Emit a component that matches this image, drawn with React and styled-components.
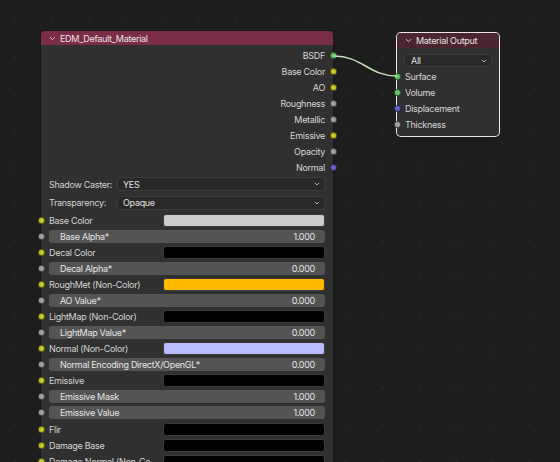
import React from 'react';
import styled, { createGlobalStyle } from 'styled-components';

const SOCKET = {
  shader: '#63c763',
  color: '#c7c729',
  float: '#a1a1a1',
  vector: '#6363c7',
};

const OUTPUTS = [
  { name: 'BSDF', type: 'shader' },
  { name: 'Base Color', type: 'color' },
  { name: 'AO', type: 'color' },
  { name: 'Roughness', type: 'float' },
  { name: 'Metallic', type: 'float' },
  { name: 'Emissive', type: 'color' },
  { name: 'Opacity', type: 'float' },
  { name: 'Normal', type: 'vector' },
];

const INPUTS = [
  { kind: 'color', name: 'Base Color', swatch: '#cccccc' },
  { kind: 'value', name: 'Base Alpha*', value: '1.000' },
  { kind: 'color', name: 'Decal Color', swatch: '#000000' },
  { kind: 'value', name: 'Decal Alpha*', value: '0.000' },
  { kind: 'color', name: 'RoughMet (Non-Color)', swatch: '#ffbb00' },
  { kind: 'value', name: 'AO Value*', value: '0.000' },
  { kind: 'color', name: 'LightMap (Non-Color)', swatch: '#000000' },
  { kind: 'value', name: 'LightMap Value*', value: '0.000' },
  { kind: 'color', name: 'Normal (Non-Color)', swatch: '#bbbbff' },
  { kind: 'value', name: 'Normal Encoding DirectX/OpenGL*', value: '0.000' },
  { kind: 'color', name: 'Emissive', swatch: '#000000' },
  { kind: 'value', name: 'Emissive Mask', value: '1.000' },
  { kind: 'value', name: 'Emissive Value', value: '1.000' },
  { kind: 'color', name: 'Flir', swatch: '#000000' },
  { kind: 'color', name: 'Damage Base', swatch: '#000000' },
  { kind: 'color', name: 'Damage Normal (Non_Co...', swatch: '#000000' },
];

const MATERIAL_OUTPUTS = [
  { name: 'Surface', type: 'shader' },
  { name: 'Volume', type: 'shader' },
  { name: 'Displacement', type: 'vector' },
  { name: 'Thickness', type: 'float' },
];

function Chevron({ size = 7, color = '#d0d0d0' }) {
  return (
    <svg width={size} height={size} viewBox="0 0 8 8">
      <path d="M1.5 2.8 L4 5.3 L6.5 2.8" fill="none" stroke={color} strokeWidth="1.1" strokeLinecap="round" strokeLinejoin="round" />
    </svg>
  );
}

function Dropdown({ label }) {
  return (
    <Select>
      <span>{label}</span>
      <Chevron size={6} />
    </Select>
  );
}

export default function App() {
  return (
    <>
      <GlobalStyle />
      <Canvas>
        <Link width="560" height="462">
          <path d="M334 56 C 362 56, 369 76, 397 76" fill="none" stroke="#c3e0bd" strokeWidth="1.6" />
        </Link>

        <Node $left={41} $top={31} $width={292}>
          <Header $bg="#7b2c46">
            <Chevron />
            <span>EDM_Default_Material</span>
          </Header>
          <Body>
            <Outputs>
              {OUTPUTS.map(o => (
                <OutputRow key={o.name}>
                  {o.name}
                  <Socket $color={SOCKET[o.type]} $side="right" />
                </OutputRow>
              ))}
            </Outputs>
            <PropRow>
              <PropLabel>Shadow Caster:</PropLabel>
              <Dropdown label="YES" />
            </PropRow>
            <PropRow>
              <PropLabel>Transparency:</PropLabel>
              <Dropdown label="Opaque" />
            </PropRow>
            <Inputs>
              {INPUTS.map(input =>
                input.kind === 'color' ? (
                  <InputRow key={input.name}>
                    <Socket $color={SOCKET.color} $side="left" />
                    <InputLabel>{input.name}</InputLabel>
                    <Swatch $color={input.swatch} />
                  </InputRow>
                ) : (
                  <InputRow key={input.name}>
                    <Socket $color={SOCKET.float} $side="left" />
                    <Slider>
                      <span>{input.name}</span>
                      <span>{input.value}</span>
                    </Slider>
                  </InputRow>
                )
              )}
            </Inputs>
          </Body>
        </Node>

        <Node $left={397} $top={33} $width={102} $selected>
          <Header $bg="#4b2530" $small>
            <Chevron />
            <span>Material Output</span>
          </Header>
          <Body $pad>
            <TargetSelect>
              <span>All</span>
              <Chevron size={6} />
            </TargetSelect>
            {MATERIAL_OUTPUTS.map(o => (
              <TargetRow key={o.name}>
                <Socket $color={SOCKET[o.type]} $side="left" />
                {o.name}
              </TargetRow>
            ))}
          </Body>
        </Node>
      </Canvas>
    </>
  );
}

const GlobalStyle = createGlobalStyle`
  html, body {
    margin: 0;
    padding: 0;
    background: #1d1d1d;
  }
  body {
    font-family: Inter, "DejaVu Sans", sans-serif;
    font-size: 9px;
    letter-spacing: -0.3px;
    color: #dcdcdc;
    -webkit-font-smoothing: antialiased;
  }
`;

const Canvas = styled.div`
  position: relative;
  width: 560px;
  height: 462px;
  overflow: hidden;
  background-color: #1d1d1d;
  background-image: radial-gradient(circle, #2b2b2b 0.8px, transparent 1.2px);
  background-size: 36.75px 36.75px;
  background-position: 33.6px 2.6px;
`;

const Link = styled.svg`
  position: absolute;
  left: 0;
  top: 0;
  z-index: 2;
  pointer-events: none;
`;

const Node = styled.div`
  position: absolute;
  left: ${({ $left }) => $left}px;
  top: ${({ $top }) => $top}px;
  width: ${({ $width }) => $width}px;
  border-radius: 4px;
  background: #303030;
  box-shadow: ${({ $selected }) =>
    $selected ? '0 0 0 1px #e8e8e8' : '0 0 0 1px #181818'};
  z-index: 1;
`;

const Header = styled.div`
  display: flex;
  align-items: center;
  gap: 4px;
  height: ${({ $small }) => ($small ? 15 : 14)}px;
  padding-left: 8px;
  background: ${({ $bg }) => $bg};
  border-radius: 4px 4px 0 0;
  color: #e6e6e6;
  line-height: 1;
`;

const Body = styled.div`
  display: flex;
  flex-direction: column;
  padding-bottom: ${({ $pad }) => ($pad ? 4 : 0)}px;
  border-radius: 0 0 4px 4px;
`;

const Outputs = styled.div`
  display: flex;
  flex-direction: column;
  padding-top: 2px;
`;

const OutputRow = styled.div`
  position: relative;
  display: flex;
  align-items: center;
  justify-content: flex-end;
  height: 16px;
  padding-right: 8px;
  color: #d6d6d6;
`;

const Socket = styled.span`
  position: absolute;
  top: 50%;
  ${({ $side }) => ($side === 'right' ? 'right: -3.5px;' : 'left: -3.5px;')}
  width: 5px;
  height: 5px;
  margin-top: -3.5px;
  border-radius: 50%;
  background: ${({ $color }) => $color};
  border: 1px solid rgba(0, 0, 0, 0.55);
`;

const PropRow = styled.div`
  display: flex;
  align-items: center;
  height: 18.5px;
  padding: 0 8px;
`;

const PropLabel = styled.span`
  width: 68px;
  color: #d0d0d0;
`;

const Select = styled.div`
  flex: 1;
  display: flex;
  align-items: center;
  justify-content: space-between;
  height: 12px;
  padding: 0 4px 0 5px;
  background: #282828;
  border: 1px solid #3c3c3c;
  border-radius: 3px;
  color: #e0e0e0;
`;

const Inputs = styled.div`
  display: flex;
  flex-direction: column;
`;

const InputRow = styled.div`
  position: relative;
  display: flex;
  align-items: center;
  height: 16.08px;
  padding: 0 8px;
`;

const InputLabel = styled.span`
  width: 114px;
  color: #d4d4d4;
  white-space: nowrap;
  overflow: hidden;
`;

const Swatch = styled.div`
  flex: 1;
  height: 11px;
  border-radius: 3px;
  background: ${({ $color }) => $color};
  border: 1px solid #3a3a3a;
`;

const Slider = styled.div`
  flex: 1;
  display: flex;
  align-items: center;
  justify-content: space-between;
  height: 13px;
  padding: 0 10px 0 11px;
  border-radius: 3px;
  background: #545454;
  color: #e4e4e4;
  white-space: nowrap;
`;

const TargetSelect = styled.div`
  display: flex;
  align-items: center;
  justify-content: space-between;
  height: 11px;
  margin: 6px 7px 1px 7px;
  padding: 0 4px 0 6px;
  background: #282828;
  border: 1px solid #3c3c3c;
  border-radius: 3px;
  color: #e0e0e0;
`;

const TargetRow = styled.div`
  position: relative;
  display: flex;
  align-items: center;
  height: 16px;
  padding-left: 8px;
  color: #d6d6d6;
`;
